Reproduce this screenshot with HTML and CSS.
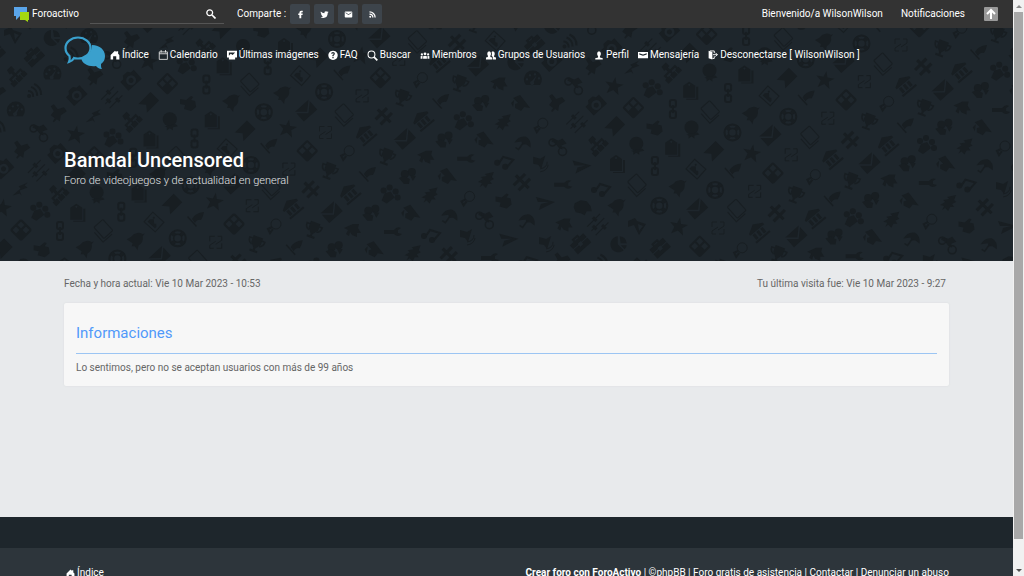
FILE: index.html
```html
<!DOCTYPE html>
<html lang="es">
<head>
<meta charset="utf-8">
<meta name="viewport" content="width=device-width, initial-scale=1">
<title>Bamdal Uncensored</title>
<link rel="stylesheet" href="styles.css">
</head>
<body>
<svg class="sprite" aria-hidden="true">
  <defs>
    <symbol id="home" viewBox="0 0 16 16"><path d="M8 1 1 8v7h4v-5h5v5h5V8l-2-2V2h-3v1z"/></symbol>
    <!-- header motifs, centred on the origin -->
    <g id="compass"><path d="M-9-5-2-8 0-5 9-2 2 9-3-1-9 1z M1-2 2 5 6 0z" fill-rule="evenodd"/></g>
    <g id="pie"><path d="M-1-8A8 8 0 1 0 5 6L-1 0z"/><path d="M1-8a8 8 0 0 1 7 7L2-1z M8 1 2 1 6 5A8 8 0 0 0 8 1z"/></g>
    <g id="briefcase" transform="rotate(-42)"><path d="M-9-5h5v-3h8v3h5v5H2v-1h-4v1h-7z M-2-6v1h4v-1z M-9 1h7v2h4V1h7v6H-9z" fill-rule="evenodd"/></g>
    <g id="network" transform="rotate(-45)"><path d="M-3-9h6v5H1v3h7v4h1v5H4V3h2V1H1v2h2v5h-6V3h2V1h-5v2h2v5h-6V3h2v-4h6v-3h-2z"/></g>
    <g id="gauge"><path d="M-7 6A9 9 0 1 1 7 6z M-6-1a1.200 1.200 0 1 0 .1 0z M-3-5a1.200 1.200 0 1 0 .1 0z M2-6a1.200 1.200 0 1 0 .1 0z M6-2a1.200 1.200 0 1 0 .1 0z M4-4-1 2a2 2 0 1 0 2 1z" fill-rule="evenodd"/></g>
    <g id="wifi" fill="none" stroke="currentColor" stroke-width="2"><path d="M-6-1a5 5 0 0 1 5 6 M-3-5a9 9 0 0 1 6 9 M0-8a12 12 0 0 1 7 11"/><circle cx="-5" cy="4" r="1"/></g>
    <g id="pin"><path d="M-7-7-4-9 0-4 6-6 9-2 3 2 2 8-1 6-4 9-5 8-3 5-7 2-4-2z"/></g>
    <g id="moto"><path d="M-6-7 0-5 4-7 8-2 3 0 4 4 0 2-3-2-7-4z"/><g fill="none" stroke="currentColor" stroke-width="1.500"><circle cx="-6" cy="-3" r="3.500"/><circle cx="4" cy="6" r="4"/></g></g>
    <g id="camera" transform="rotate(-42)"><path d="M-9-5h4l2-3h6l2 3h4V7H-9z M0-4a5 5 0 1 0 .1 0z M0-1.500a2.500 2.500 0 1 1-.1 0z" fill-rule="evenodd"/></g>
    <g id="sliders" transform="rotate(45)"><path d="M-7-9h1v18h-1z M-1-9h1v18h-1z M5-9h1v18H5z M-9-3h5v3h-5z M-3 3h5v3h-5z M3-4h5v3H3z"/></g>
    <g id="lightning"><path d="M7-7-2-3 0-1-8 6-1 4 1 6-1 1 7-2 4-4z"/></g>
    <g id="star" transform="rotate(10)"><path d="M0-9 2-3 9-3 4 1 6 8 0 4-6 8-4 1-9-3-2-3z"/></g>
    <g id="paw"><path d="M-8 6-5-1 1-3 5 3-3 9z"/><circle cx="-6" cy="-4" r="3"/><circle cx="0" cy="-7" r="3"/><circle cx="6" cy="-3" r="3"/><circle cx="8" cy="3" r="3"/></g>
    <g id="film" transform="rotate(-45)"><path d="M-6-8H6q2 0 2 2V6q0 2-2 2H-6q-2 0-2-2V-6q0-2 2-2z M-6-6v5h5v-5z M1-6v5h5v-5z M1 1v5h5V1z" fill-rule="evenodd"/></g>
    <g id="bookmark" transform="rotate(45)"><path d="M-6-8H6V9L0 4-6 9z"/></g>
    <g id="badge"><circle cx="0" cy="-2" r="7"/><path d="M-5 5 6 3 8 5 3 6 3 9 0 7-3 9-3 6z"/></g>
    <g id="tag"><path d="M-2-9 4-5V7H-8V-5z M-2-7a1 1 0 1 0 .1 0z M5-4h2V9H-5V8H5z" fill-rule="evenodd"/></g>
    <g id="link" fill="none" stroke="currentColor" stroke-width="2"><rect x="-3" y="-9" width="6" height="7" rx="2"/><rect x="-3" y="2" width="6" height="7" rx="2"/><path d="M0-4V4"/></g>
    <g id="hand"><path d="M-8-4-2-3 3-7 5-6 3-3 7-2 8 4 3 8-4 6-3 2-8 1z"/></g>
    <g id="phone" transform="rotate(-42)" fill="none" stroke="currentColor"><rect x="-5" y="-8" width="12" height="15" rx="1"/><path d="M-8-4V9H4"/></g>
    <g id="bell"><path d="M-9-1Q-4-3-2-6 4-9 7-6L9-7 7-4Q8 2 3 5 2 7 2 10L-1 6-4 6-3 3z"/></g>
    <g id="ring" fill="none" stroke="currentColor"><circle r="8" stroke-width="2"/><circle r="4" stroke-width="1.500"/><path d="M-6-6-3-3M6-6 3-3M-6 6-3 3M6 6 3 3" stroke-width="4"/></g>
    <g id="image" transform="rotate(42)"><path d="M-8-7H8V7H-8z M-7-6V6H7V-6z" fill-rule="evenodd"/><path d="M-5 4V1l3-3 3 3 2-1 2 2v2z"/><circle cx="-3" cy="-3" r="1"/></g>
    <g id="envelope" transform="rotate(-42)"><path d="M-9-6H9L0 2z M-9-4 0 4 9-4V7H-9z"/></g>
    <g id="flag"><path d="M-9-3-8-4 1 6 0 7z M-4-1Q-1-7 8-8 7-3 5 0 1-1-1 3z"/></g>
    <g id="broken" fill="none" stroke="currentColor"><path d="M-6-1V-6H-1 M6 1V6H1 M-6 3 0-1 M0 2 6-2 M-2 6-6 6-6 3 M2-6 6-6 6-2"/></g>
    <g id="hash" transform="rotate(45)"><path d="M-5-8h3v16h-3z M2-8h3V8H2z M-9-2H9v3H-9z"/></g>
    <g id="bank" transform="rotate(-40)"><path d="M-9-4 0-9 9-4v2H-9z M-7-1h3v6h-3z M-2-1h3v6h-3z M3-1h3v6H3z M-9 6H9v2H-9z"/></g>
    <g id="bulb" fill="none" stroke="currentColor"><circle cx="2" cy="-2" r="5"/><path d="M-2 1-6 3-4 7-1 3" stroke-width="2"/></g>
    <g id="trophy" transform="rotate(20)"><path d="M-5-8H5V-1L1 4V6H4V8H-4V6H-1V4L-5-1z"/><path d="M-5-5H-8Q-8 0-4 1M5-5H8Q8 0 4 1" fill="none" stroke="currentColor" stroke-width="1.500"/></g>
    <g id="people"><circle cx="4" cy="-4" r="4"/><circle cx="-3" cy="-2" r="4"/><path d="M-9 2-4 0 2 3 1 8-4 8z M2-1 8 0 5 5z"/></g>
    <g id="house"><path d="M-9-3 0-7 6-7 5-3 8 2 4 2 4 6-1 4-3 1-4 5-7 3-5-1z"/></g>
    <g id="gradcap"><path d="M-8-6-1-9 9 4 3 3 0 7-6 4-6 0-3-1z M-10-1-7-4-8 3z"/></g>
    <g id="tree"><path d="M8-8-1-6 1-4-5-3-3-1-8 2-4 3-6 7-3 5 0 8 2 4 6 4 4 1 8-1 6-3z"/></g>
    <g id="wrench"><path d="M-9-2H1Q4-6 8-4L5-2V1L9 2Q5 6 1 2H-9z"/></g>
    <g id="umbrella"><path d="M-8-1Q-4-8 3-7 9-4 8 4L4 1 0 1-1-2z"/><path d="M1-1-4 6-7 4" fill="none" stroke="currentColor" stroke-width="1.500"/></g>
    <g id="music"><circle cx="-7" cy="1" r="3"/><circle cx="1" cy="5" r="3"/><path d="M-5 1-1-5 9-2 3 5" fill="none" stroke="currentColor" stroke-width="2"/></g>
    <g id="speaker"><path d="M-7-7 0-5 5-8 1 5-2 1-7 0z"/><path d="M7-2Q7 4 0 5M8 1Q7 7 0 8" fill="none" stroke="currentColor"/></g>
    <g id="plane"><path d="M-9-6 10-1-6 7-4 1 4-1-7-1z"/></g>
    <g id="piggy"><path d="M-8-4-2-7 4-6 8-1 9 4 4 4 2 8-2 6-7 5-9 0z"/></g>
  </defs>
</svg>

<div class="shell">
  <div class="page">
    <header class="topbar">
      <a class="brand" href="#">
        <svg width="15" height="15" viewBox="0 0 15 15" aria-hidden="true"><path d="M0 0h13v9H6l-4 4V9H0z" fill="#5aa5ea"/><path d="M6 5h9v8h-1v2l-3-2H6z" fill="#a3d810"/></svg>
        Foroactivo</a>
      <form class="search">
        <input type="text" aria-label="Buscar">
        <button type="button" aria-label="Buscar"><svg width="10" height="10" viewBox="0 0 10 10"><circle cx="3.700" cy="3.700" r="2.900" fill="none" stroke="currentColor" stroke-width="1.300"/><path d="M6 6l3.500 3.500" stroke="currentColor" stroke-width="1.700"/></svg></button>
      </form>
      <span class="share-label">Comparte :</span>
      <nav class="share" aria-label="Comparte">
        <a href="#" aria-label="Facebook"><svg viewBox="0 0 12 12"><path d="M4.500 11V6.800H3V4.800h1.500V3.500Q4.500 1 7 1h2v2H7.700q-.7 0-.7.700v1.100h2l-.3 2H7V11z"/></svg></a>
        <a href="#" aria-label="Twitter"><svg viewBox="0 0 12 12"><path d="M1 2q2 2.200 4.800 2.300Q5.600 1.500 8 1.500q1 0 1.700.7l1.500-.5-.9 1.300 1.200-.2-1.200 1.200Q10.200 10.500 4.500 10.500 2.200 10.500.8 9.500q2 0 3.200-1Q2.400 8.300 2 7h.9Q1.200 6.500 1.100 4.700l.9.200Q.3 3.700 1 2z"/></svg></a>
        <a href="#" aria-label="Correo"><svg viewBox="0 0 12 12"><path d="M2 2h8q1 0 1 1v6q0 1-1 1H2q-1 0-1-1V3q0-1 1-1zm0 1v1l4 2.500L10 4V3L6 5.500z" fill-rule="evenodd"/></svg></a>
        <a href="#" aria-label="RSS"><svg viewBox="0 0 12 12"><circle cx="3" cy="9" r="1.300"/><path d="M2 5.500A4.500 4.500 0 0 1 6.500 10M2 2.500A7.500 7.500 0 0 1 9.500 10" fill="none" stroke="currentColor" stroke-width="1.700"/></svg></a>
      </nav>
      <a class="welcome" href="#">Bienvenido/a WilsonWilson</a>
      <a class="notes" href="#">Notificaciones</a>
      <a class="totop" href="#" aria-label="Subir"><svg width="12" height="12" viewBox="0 0 12 12"><path d="M6 11V2M2 6l4-4 4 4" fill="none" stroke="#fff" stroke-width="2"/></svg></a>
    </header>

    <section class="hero">
      <svg class="motifs" id="motifs" aria-hidden="true"></svg>
      <nav class="menu" aria-label="Principal">
        <a class="logo" href="#" aria-label="Bamdal Uncensored"><svg width="42" height="34" viewBox="0 0 42 34"><path d="M28 9c8 0 13 5 13 11 0 3-1 6-4 8 0 2 0 4 1 5-3 0-5-2-6-3-7 1-14-2-15-8 6-1 11-6 11-13z" fill="#3aa0cd"/><path d="M14 1.500c7 0 12.500 4.700 12.500 10.500S21 22.500 14 22.500c-2 0-3 0-4-.5-1 2-3 3.500-5 4 1-2 1-4 .5-6C3 18 1.500 15 1.500 12 1.500 6.200 7 1.500 14 1.500z" fill="none" stroke="#3aa0cd" stroke-width="2.200"/></svg></a>
        <a href="#"><svg viewBox="0 0 16 16"><use href="#home"/></svg>Índice</a>
        <a href="#"><svg viewBox="0 0 16 16"><path d="M2 3h13v12H2zM2 6h13M5 0v4M12 0v4" fill="none" stroke="currentColor" stroke-width="1.200"/></svg>Calendario</a>
        <a href="#"><svg viewBox="0 0 16 16"><path d="M0 1h16v11h-3v3H3v-3H0zM3 4v5l3-3 3 2 4-4z" fill-rule="evenodd"/></svg>Últimas imágenes</a>
        <a href="#"><svg viewBox="0 0 16 16"><path d="M8 1a7.500 7.500 0 1 0 .1 0zM7 11h2v2H7zM5 6q0-3 3-3t3 3q0 1-2 3v1H7V8q2-1 2-2 0-1-1-1T7 6z" fill-rule="evenodd"/></svg>FAQ</a>
        <a href="#"><svg class="wide" viewBox="0 0 16 16"><circle cx="6.500" cy="6.500" r="5" fill="none" stroke="currentColor" stroke-width="1.500"/><path d="M10 10l5 5" stroke="currentColor" stroke-width="2.500"/></svg>Buscar</a>
        <a href="#"><svg viewBox="0 0 16 16"><circle cx="8" cy="6" r="2.200"/><circle cx="3" cy="7" r="1.800"/><circle cx="13" cy="7" r="1.800"/><path d="M5 14v-4l3-1 3 1v4zM1 14v-4l3-1v5zM15 14v-4l-3-1v5z"/></svg>Miembros</a>
        <a href="#"><svg viewBox="0 0 16 16"><path d="M5 2q3 0 3 4 0 2-1 3v2l3 1v3H0v-3l3-1V9Q2 8 2 6q0-4 3-4z"/><path d="M11 2q3 0 3 4 0 2-1 3v2l3 1v3h-5v-4L9 9q1-3 0-6z"/></svg>Grupos de Usuarios</a>
        <a href="#"><svg viewBox="0 0 16 16"><path d="M8 2q3 0 3 4 0 2-1.500 4v2l4.500 1v2H2v-2l4.500-1v-2Q5 8 5 6q0-4 3-4z"/></svg>Perfil</a>
        <a href="#"><svg viewBox="0 0 16 16"><path d="M0 3h16v10H0zm2 2v2l6 2 6-2V5L8 7z" fill-rule="evenodd"/></svg>Mensajería</a>
        <a href="#"><svg viewBox="0 0 16 16"><path d="M1 1l6 2v12l-6-2z"/><path d="M3 1.500h7V5M10 10v3.500H7M8 7.500h7M12 4.500l3 3-3 3" fill="none" stroke="currentColor" stroke-width="1.500"/></svg>Desconectarse [ WilsonWilson ]</a>
      </nav>
      <div class="headline">
        <h1>Bamdal Uncensored</h1>
        <p>Foro de videojuegos y de actualidad en general</p>
      </div>
    </section>

    <main class="content">
      <div class="dates">
        <span>Fecha y hora actual: Vie 10 Mar 2023 - 10:53</span>
        <span>Tu última visita fue: Vie 10 Mar 2023 - 9:27</span>
      </div>
      <article class="panel">
        <h2>Informaciones</h2>
        <p>Lo sentimos, pero no se aceptan usuarios con más de 99 años</p>
      </article>
    </main>

    <footer class="footer">
      <div class="footer-band"></div>
      <div class="footer-links">
        <a class="footer-home" href="#"><svg viewBox="0 0 16 16"><use href="#home"/></svg>Índice</a>
        <p><a href="#"><strong>Crear foro con ForoActivo</strong></a> | <a href="#">©phpBB</a> | <a href="#">Foro gratis de asistencia</a> | <a href="#">Contactar</a> | <a href="#">Denunciar un abuso</a></p>
      </div>
    </footer>
  </div>
  <div class="scrollbar" aria-hidden="true">
    <svg viewBox="0 0 10 10"><path d="M2 7l3-3 3 3z" fill="#8a8a8a"/></svg>
    <div class="thumb"></div>
    <svg viewBox="0 0 10 10"><path d="M2 4l3 3 3-3z" fill="#505050"/></svg>
  </div>
</div>
<script src="motifs.js"></script>
</body>
</html>
```
FILE: styles.css
```css
* { box-sizing: border-box; }
body { margin: 0; font-family: Roboto, "Liberation Sans", sans-serif; font-size: 10px; line-height: 14px; color: #666; background: #e8eaec; }
a { color: inherit; text-decoration: none; }
h1, h2, p { margin: 0; }
svg { fill: currentColor; flex: none; }
.sprite { position: absolute; width: 0; height: 0; }

.shell { display: flex; height: 100vh; overflow: hidden; }
.page { flex: 1; min-width: 0; display: flex; flex-direction: column; }

.topbar { flex: none; display: flex; align-items: center; height: 28px; padding: 0 15px 0 14px; background: #333; color: #fff; }
.brand { display: flex; align-items: center; gap: 3px; }
.search { display: flex; align-items: center; width: 134px; height: 20px; margin: 0 13px 0 11px; padding-right: 8px; border-bottom: 1px solid #555; }
.search input { flex: 1; min-width: 0; border: 0; padding: 0; background: none; color: #fff; font: inherit; outline: 0; }
.search button { display: flex; border: 0; padding: 0; background: none; color: #fff; }
.share-label { margin-right: 4px; }
.share { display: flex; gap: 4px; }
.share a { display: grid; place-items: center; width: 20px; height: 20px; border-radius: 2px; background: #3d444b; }
.share svg { width: 9px; height: 9px; }
.welcome { margin-left: auto; }
.notes { margin: 0 19px 0 18px; }
.totop { display: grid; place-items: center; width: 14px; height: 14px; border-radius: 1px; background: #999; }

.hero { flex: none; position: relative; height: 233px; padding: 8px 64px 0; overflow: hidden; background: #1e262c; color: #fff; }
.motifs { position: absolute; inset: 0; width: 100%; height: 100%; color: #181e22; }
.menu { position: relative; display: flex; align-items: center; gap: 9px; white-space: nowrap; }
.menu a { display: flex; align-items: center; gap: 2px; padding-top: 4px; }
.menu svg { width: 10px; height: 10px; }
.menu .wide { width: 11px; height: 11px; }
.menu .logo { margin-right: -5px; padding-top: 0; }
.menu .logo svg { width: 42px; height: 34px; }
.headline { position: relative; padding-top: 78px; }
.headline h1 { font-size: 20px; font-weight: 500; line-height: 24px; }
.headline p { font-size: 11px; font-weight: 300; line-height: 18px; color: #e4e6e8; }

.content { flex: none; min-height: 256px; padding: 16px 64px 0; }
.dates { display: flex; justify-content: space-between; padding-right: 3px; }
.panel { margin-top: 12px; padding: 20px 12px 11px; border-radius: 2px; background: #f7f7f7; box-shadow: 0 0 2px #d8dadc; }
.panel h2 { padding-bottom: 9px; border-bottom: 1px solid #9cc5f3; font-size: 15px; font-weight: 400; line-height: 21px; color: #5099fa; }
.panel p { padding-top: 7px; }

.footer { flex: none; color: #fff; }
.footer-band { height: 31px; background: #1e262c; }
.footer-links { display: flex; justify-content: space-between; padding: 18px 64px 24px 66px; background: #2d353b; }
.footer-home { display: flex; align-items: center; gap: 2px; }
.footer-home svg { width: 9px; height: 9px; }

.scrollbar { flex: none; display: flex; flex-direction: column; width: 11px; padding-left: 1px; background: #f1f1f1; }
.scrollbar svg { height: 12px; }
.scrollbar .thumb { flex: 1; margin: 0 1px 25px 0; background: #a8a8a8; }
```
FILE: motifs.js
```javascript
// The header backdrop is made of diagonal rows of motifs.
// Each row: [x + y of the row, x - y of its first motif, motif names, x - y above / below which it is drawn]
const rows = [
  [48, -22, 'compass briefcase pie network'],
  [90, 14, 'pie briefcase network pin'],
  [126, 52, 'gauge wifi gauge wifi'],
  [171, 91, 'pin moto pin camera'],
  [210, 124, 'lightning star camera sliders'],
  [251, 157, 'network paw film bookmark'],
  [291, 195, 'badge tag link hand'],
  [333, 239, 'tag link phone bell'],
  [376, 298, 'ring bookmark image bell'],
  [416, 342, 'envelope star flag ring'],
  [458, 376, 'phone broken film broken'],
  [500, 414, 'hash bank bulb trophy'],
  [543, 449, 'bank envelope trophy flag', -500, 432],
  [584, 488, 'paw people house people', -500, 432],
  [625, 527, 'tree gradcap wrench gradcap', -500, 432],
  [666, 562, 'bulb umbrella music tree', -500, 432],
  [704, 596, 'hand moto speaker hash', -500, 432],
  [748, 415, 'plane wrench plane umbrella', -500, 432],
  [790, 412, 'music piggy house speaker', -500, 432],
  [823, 410, 'bell sliders briefcase pin', -500, 432],
  [863, 411, 'compass pie wifi gauge', -500, 432],
  [907, 412, 'briefcase network pin moto', -500, 432],
  [536, 491, 'compass image', 432],
  [578, 490, 'briefcase pie', 432],
  [612, 527, 'wifi camera gauge moto', 432],
  [659, 563, 'camera pin moto pin', 432],
  [700, 601, 'sliders lightning star camera', 432],
  [741, 599, 'network paw film bookmark', 432],
  [782, 637, 'badge tag link hand', 432],
  [821, 562, 'badge tag link phone', 432],
  [865, 600, 'ring bookmark image bell', 432],
  [905, 635, 'envelope star flag ring', 432],
  [946, 673, 'phone broken film broken', 432],
  [990, 710, 'hash bank bulb trophy'],
  [1032, 743, 'bank envelope trophy flag'],
  [1071, 781, 'paw people house people'],
  [1111, 818, 'tree gradcap wrench gradcap'],
  [1151, 855, 'bulb umbrella music tree'],
  [1192, 741, 'hand moto speaker hash'],
  [1234, 780, 'plane umbrella plane wrench'],
  [1274, 784, 'music piggy house speaker']
];
const step = 36.6;
const top0 = 28;
const canvas = document.getElementById('motifs');
for (const [sum, first, names, low = -Infinity, high = Infinity] of rows) {
  const seq = names.split(' ');
  for (let k = -20; k < 24; k++) {
    const diff = first - step * k;
    const x = (sum + diff) / 2;
    const y = (sum - diff) / 2;
    if (diff < low || diff > high || y < 15 || y > 275) continue;
    const use = document.createElementNS('http://www.w3.org/2000/svg', 'use');
    const index = ((k % seq.length) + seq.length) % seq.length;
    use.setAttribute('href', '#' + seq[index]);
    use.setAttribute('transform', `translate(${x.toFixed(1)} ${(y - top0).toFixed(1)})`);
    canvas.append(use);
  }
}
```
